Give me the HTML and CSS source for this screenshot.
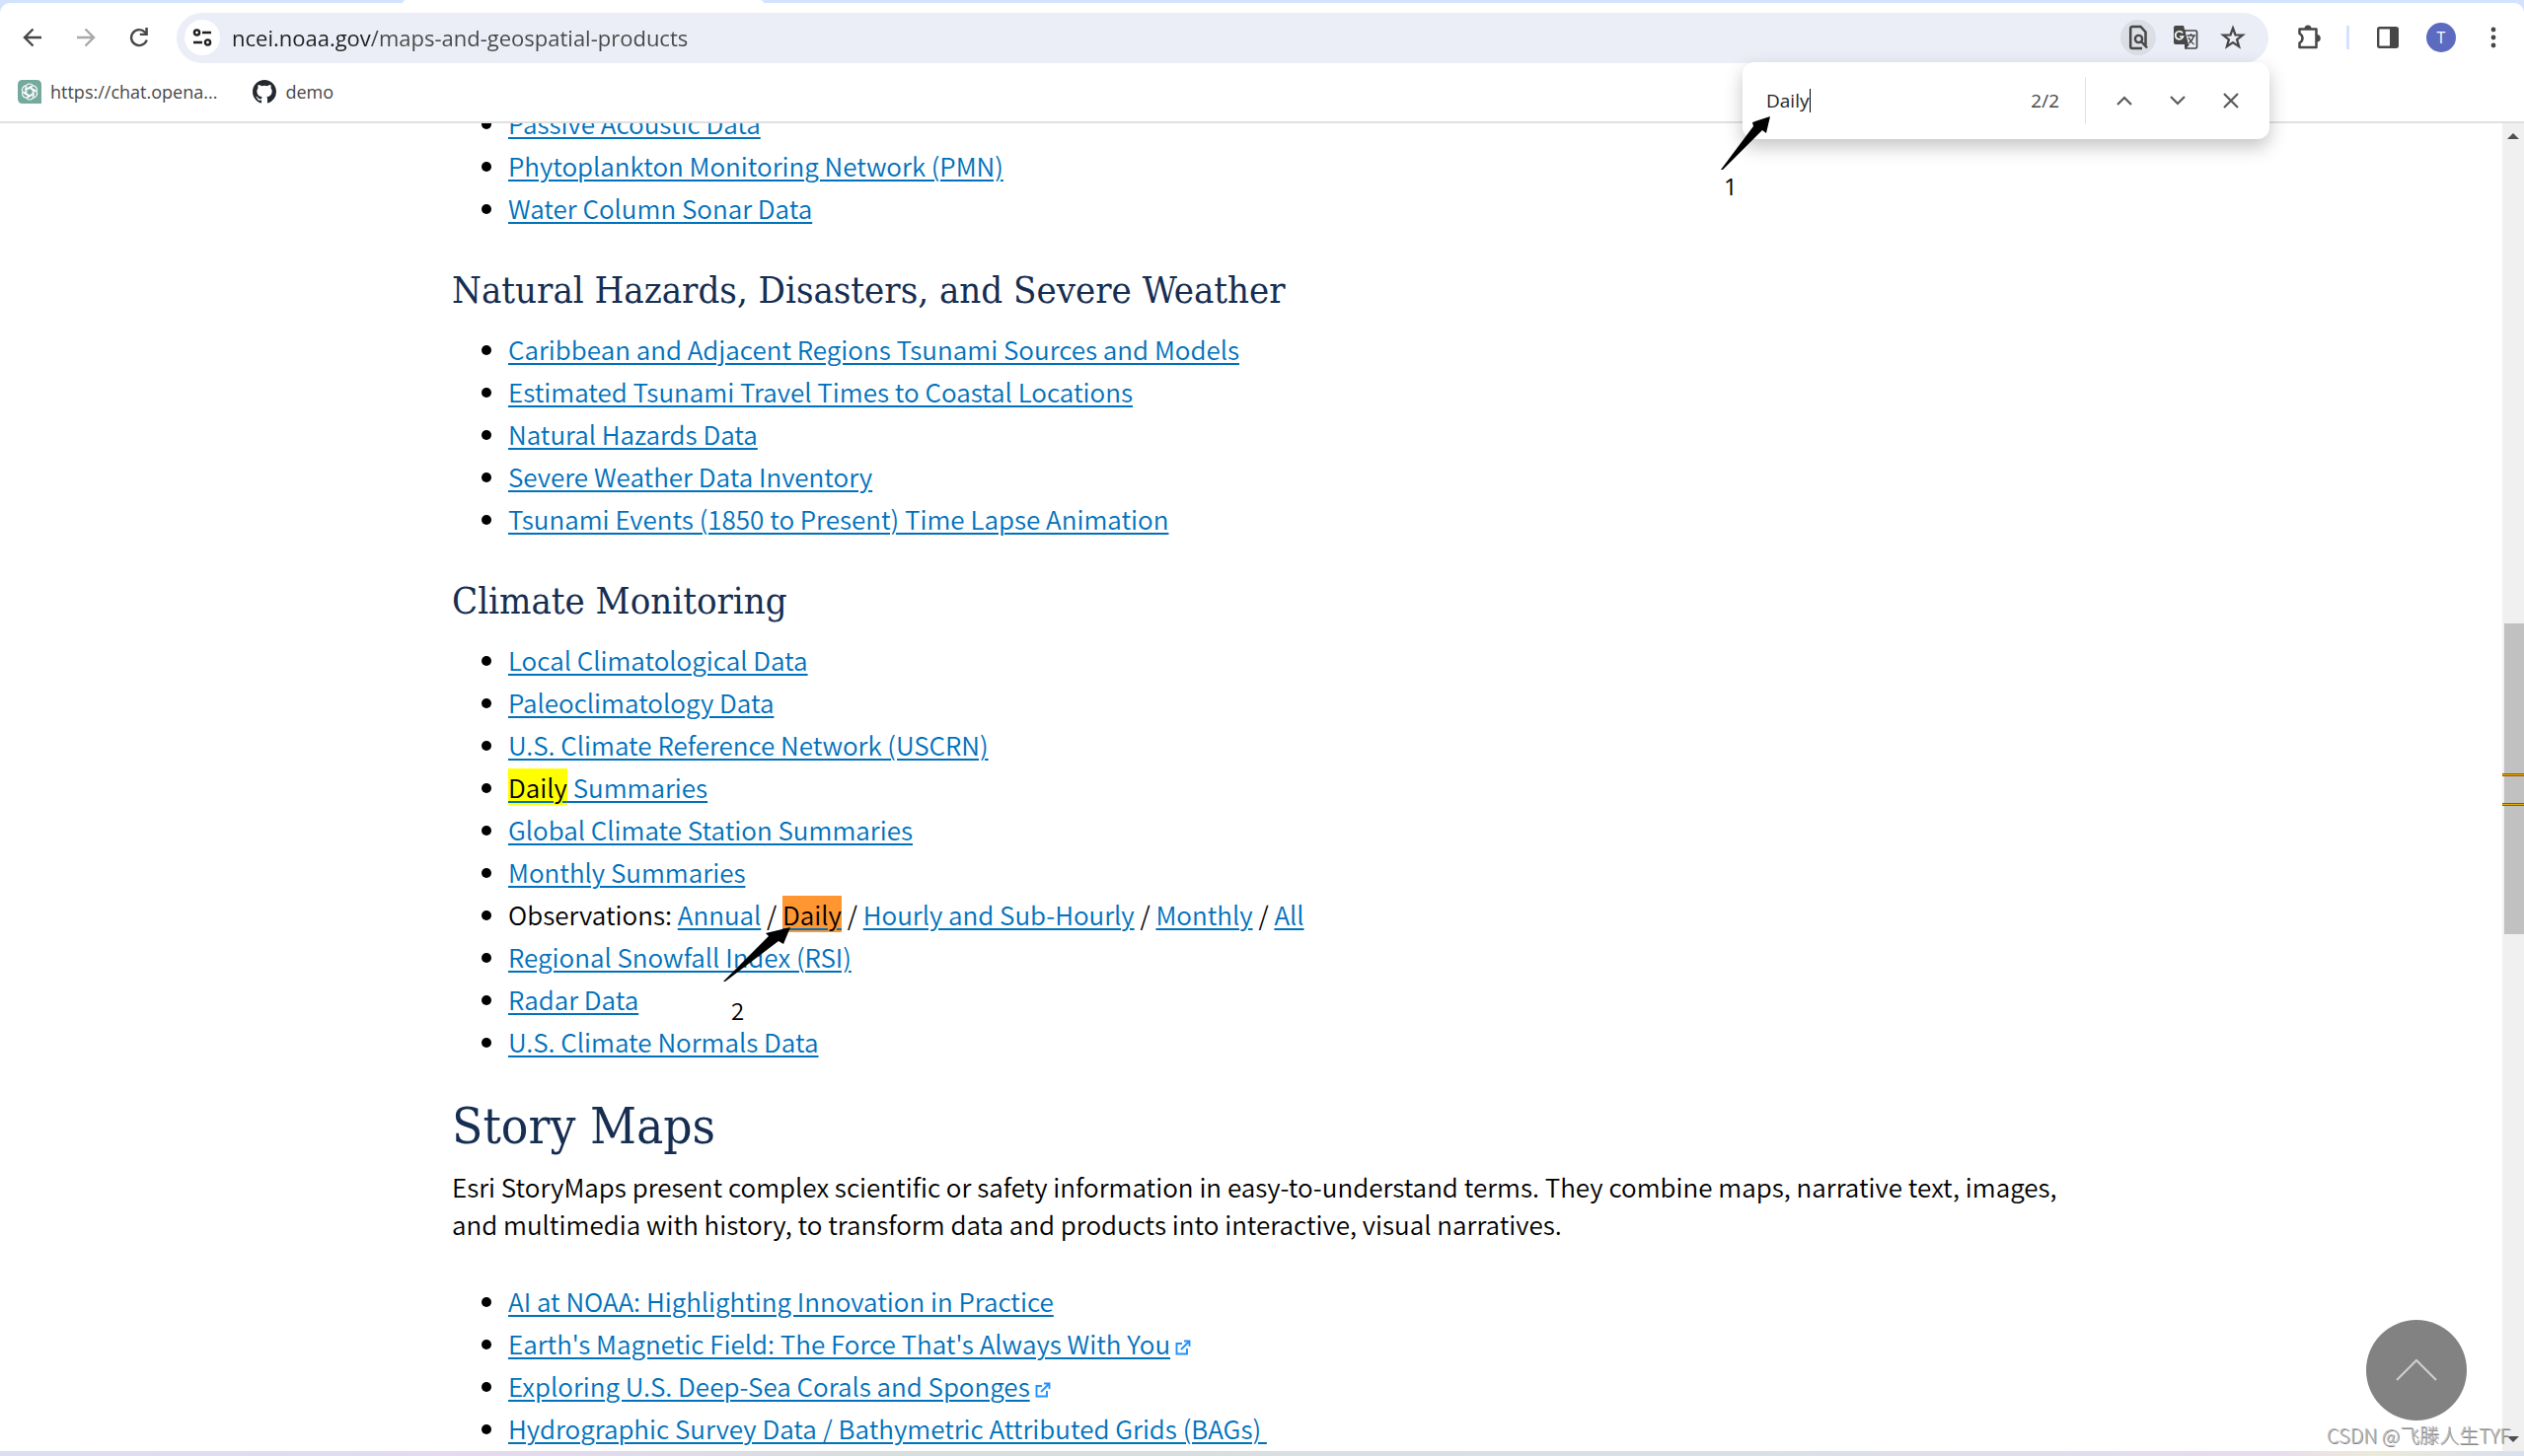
FILE: index.html
```html
<!DOCTYPE html>
<html lang="en">
<head>
<meta charset="utf-8">
<title>Maps and Geospatial Products</title>
<link rel="stylesheet" href="styles.css">
</head>
<body>
<header class="chrome">
  <div class="tabstrip"><div class="tab"></div></div>
  <div class="toolbar">
    <nav class="nav" aria-label="Navigation">
      <button class="icon-btn" aria-label="Back"><svg width="20" height="20" viewBox="0 0 20 20"><path d="M19 10H2M10.500 1.500L2 10l8.500 8.500" fill="none" stroke="#474747" stroke-width="2.400"/></svg></button>
      <button class="icon-btn" aria-label="Forward"><svg width="20" height="20" viewBox="0 0 20 20"><path d="M1 10h17M9.500 1.500L18 10l-8.500 8.500" fill="none" stroke="#a9a9a9" stroke-width="2.400"/></svg></button>
      <button class="icon-btn" aria-label="Reload"><svg width="20" height="20" viewBox="0 0 20 20"><path d="M17.700 12.500A8 8 0 1 1 16 4.700L18 7" fill="none" stroke="#474747" stroke-width="2.400"/><path d="M18.800 0v8h-8V5.700h5.500V0z" fill="#474747"/></svg></button>
    </nav>
    <div class="omnibox">
      <button class="site-info" aria-label="Site information"><svg width="20" height="18" viewBox="0 0 20 18" fill="none" stroke="#1f1f1f" stroke-width="2.400"><circle cx="4.500" cy="4" r="2.600"/><path d="M10 4h9M1 14h9"/><circle cx="15.500" cy="14" r="2.600"/></svg></button>
      <input class="url" type="text" aria-label="Address" value="ncei.noaa.gov/maps-and-geospatial-products">
      <button class="page-btn page-btn-on" aria-label="Find in page"><svg width="20" height="26" viewBox="0 0 20 26"><path d="M17.500 21V7.500L12.500 2H4Q2.200 2 2.200 4v18q0 2 1.800 2h10" fill="none" stroke="#474747" stroke-width="2.500"/><circle cx="10.500" cy="14.500" r="3.600" fill="none" stroke="#474747" stroke-width="2.400"/><path d="M13 17l6 6.500" stroke="#474747" stroke-width="2.500"/></svg></button>
      <button class="page-btn" aria-label="Translate"><svg width="26" height="26" viewBox="0 0 26 26"><path d="M12 6h11q1.500 0 1.500 1.500v15q0 1.500-1.500 1.500H13z" fill="none" stroke="#474747" stroke-width="1.700"/><path d="M3 1h8l5 19H3q-2 0-2-2V3q0-2 2-2zM12 20h5l-4 5z" fill="#474747"/><path d="M10 8.500A4 4 0 1 0 10.500 12H7" fill="none" stroke="#fff" stroke-width="1.700"/><path d="M14.500 11H23M18.500 9v2M21.500 11q-1.500 5-5 8M16 13q2 4.500 5.500 7" fill="none" stroke="#474747" stroke-width="1.500"/></svg></button>
      <button class="page-btn" aria-label="Bookmark"><svg width="26" height="26" viewBox="0 0 26 26"><path d="M13 3.500l2.500 6.800 7.300.3-5.700 4.500 2 7-6.100-4-6.100 4 2-7-5.700-4.500 7.300-.3z" fill="none" stroke="#474747" stroke-width="2.300"/></svg></button>
    </div>
    <div class="actions">
      <button class="icon-btn" aria-label="Extensions"><svg width="26" height="26" viewBox="0 0 26 26"><path d="M3.500 4.500h17v18.500h-17v-4.500q3-1.500 3-4.700t-3-4.800z" fill="none" stroke="#474747" stroke-width="2.500" stroke-linejoin="round"/><path d="M8.500 4a3.500 3.500 0 0 1 7 0zM21 10a3.800 3.800 0 0 1 0 7.600z" fill="#474747"/></svg></button>
      <span class="divider"></span>
      <button class="icon-btn" aria-label="Side panel"><svg width="22" height="22" viewBox="0 0 22 22"><rect x="1.200" y="1.200" width="19.600" height="19.600" rx="1.500" fill="none" stroke="#474747" stroke-width="2.400"/><path d="M13 1h8v20h-8z" fill="#474747"/></svg></button>
      <button class="avatar" aria-label="Profile">T</button>
      <button class="icon-btn" aria-label="Menu"><svg width="6" height="22" viewBox="0 0 6 22" fill="#474747"><circle cx="3" cy="3" r="2.400"/><circle cx="3" cy="11" r="2.400"/><circle cx="3" cy="19" r="2.400"/></svg></button>
    </div>
  </div>
  <nav class="bookmarks" aria-label="Bookmarks">
    <a href="#chat"><svg width="24" height="24" viewBox="0 0 24 24"><path d="M5 0h14q5 0 5 5v19H5q-5 0-5-5V5q0-5 5-5z" fill="#74aa9c"/><g fill="none" stroke="#fff" stroke-width="1.200"><g id="petal"><path d="M8 15V8.500Q8 4 12 4q2 0 3.300 1.600M10 9.500l4.500-2.600"/></g><use href="#petal" transform="rotate(60 12 12)"/><use href="#petal" transform="rotate(120 12 12)"/><use href="#petal" transform="rotate(180 12 12)"/><use href="#petal" transform="rotate(240 12 12)"/><use href="#petal" transform="rotate(300 12 12)"/></g></svg>https://chat.opena...</a>
    <a href="#demo"><svg width="24" height="24" viewBox="0 0 16 16"><path fill="#24292f" d="M8 0C3.580 0 0 3.580 0 8c0 3.540 2.290 6.530 5.470 7.590.4.070.55-.17.55-.38 0-.19-.01-.82-.01-1.490-2.010.37-2.530-.49-2.690-.94-.09-.23-.48-.94-.82-1.130-.28-.15-.68-.52-.01-.53.63-.01 1.080.58 1.230.82.72 1.210 1.870.87 2.330.66.07-.52.28-.87.51-1.070-1.780-.2-3.640-.89-3.640-3.950 0-.87.31-1.590.82-2.150-.08-.2-.36-1.020.08-2.120 0 0 .67-.21 2.200.82a7.600 7.600 0 0 1 4 0c1.530-1.040 2.200-.82 2.200-.82.44 1.100.16 1.920.08 2.120.51.56.82 1.270.82 2.150 0 3.070-1.870 3.750-3.650 3.950.29.25.54.73.54 1.480 0 1.070-.01 1.930-.01 2.200 0 .21.15.46.55.38A8.010 8.010 0 0 0 16 8c0-4.420-3.580-8-8-8z"/></svg>demo</a>
  </nav>
  <form class="findbar">
    <input class="find-input" type="text" aria-label="Find in page" value="Daily" size="5">
    <span class="caret"></span>
    <output class="count">2/2</output>
    <button type="button" class="find-btn" aria-label="Previous"><svg width="16" height="10" viewBox="0 0 16 10"><path d="M1 9l7-7 7 7" fill="none" stroke="#5a5a5a" stroke-width="2.200"/></svg></button>
    <button type="button" class="find-btn" aria-label="Next"><svg width="16" height="10" viewBox="0 0 16 10"><path d="M1 1l7 7 7-7" fill="none" stroke="#5a5a5a" stroke-width="2.200"/></svg></button>
    <button type="button" class="find-btn" aria-label="Close"><svg width="16" height="16" viewBox="0 0 16 16"><path d="M1 1l14 14M15 1L1 15" fill="none" stroke="#5a5a5a" stroke-width="2.200"/></svg></button>
    <div class="note note-one"><svg width="52" height="56" viewBox="0 0 52 56"><path d="M50 1L46 18l-4-3L2 55H0L33 11l-1-4z"/></svg><span>1</span></div>
  </form>
</header>

<div class="viewport">
  <main class="page">
    <ul class="links links-first">
      <li><a href="#a">Passive Acoustic Data</a></li>
      <li><a href="#a">Phytoplankton Monitoring Network (PMN)</a></li>
      <li><a href="#a">Water Column Sonar Data</a></li>
    </ul>
    <h3>Natural Hazards, Disasters, and Severe Weather</h3>
    <ul class="links">
      <li><a href="#a">Caribbean and Adjacent Regions Tsunami Sources and Models</a></li>
      <li><a href="#a">Estimated Tsunami Travel Times to Coastal Locations</a></li>
      <li><a href="#a">Natural Hazards Data</a></li>
      <li><a href="#a">Severe Weather Data Inventory</a></li>
      <li><a href="#a">Tsunami Events (1850 to Present) Time Lapse Animation</a></li>
    </ul>
    <h3>Climate Monitoring</h3>
    <ul class="links">
      <li><a href="#a">Local Climatological Data</a></li>
      <li><a href="#a">Paleoclimatology Data</a></li>
      <li><a href="#a">U.S. Climate Reference Network (USCRN)</a></li>
      <li><a href="#a"><mark>Daily</mark> Summaries</a></li>
      <li><a href="#a">Global Climate Station Summaries</a></li>
      <li><a href="#a">Monthly Summaries</a></li>
      <li>Observations: <a href="#a">Annual</a> / <a href="#a" class="hit"><mark class="current">Daily</mark><span class="note note-two"><svg width="70" height="56" viewBox="0 0 70 56"><path d="M68 0L61 17l-5-3L2 55H0L46 9l-3-3z"/></svg><span>2</span></span></a> / <a href="#a">Hourly and Sub-Hourly</a> / <a href="#a">Monthly</a> / <a href="#a">All</a></li>
      <li><a href="#a">Regional Snowfall Index (RSI)</a></li>
      <li><a href="#a">Radar Data</a></li>
      <li><a href="#a">U.S. Climate Normals Data</a></li>
    </ul>
    <h2>Story Maps</h2>
    <p>Esri StoryMaps present complex scientific or safety information in easy-to-understand terms. They combine maps, narrative text, images, and multimedia with history, to transform data and products into interactive, visual narratives.</p>
    <ul class="links">
      <li><a href="#a">AI at NOAA: Highlighting Innovation in Practice</a></li>
      <li><a href="#a">Earth's Magnetic Field: The Force That's Always With You</a><svg class="ext" width="16" height="16" viewBox="0 0 16 16"><path d="M7 4H1.500v10.500H12V9M6 10l8-8M9 1.500h5.500V7" fill="none" stroke="#2491ff" stroke-width="1.900"/></svg></li>
      <li><a href="#a">Exploring U.S. Deep-Sea Corals and Sponges</a><svg class="ext" width="16" height="16" viewBox="0 0 16 16"><path d="M7 4H1.500v10.500H12V9M6 10l8-8M9 1.500h5.500V7" fill="none" stroke="#2491ff" stroke-width="1.900"/></svg></li>
      <li><a href="#a">Hydrographic Survey Data / Bathymetric Attributed Grids (BAGs)&nbsp;</a></li>
    </ul>
  </main>
  <div class="scrollbar">
    <svg width="12" height="6" viewBox="0 0 12 6"><path d="M6 0l6 6H0z" fill="#505050"/></svg>
    <div class="track"><div class="thumb"></div><i class="tick tick-a"></i><i class="tick tick-b"></i></div>
    <svg width="12" height="6" viewBox="0 0 12 6"><path d="M0 0h12L6 6z" fill="#505050"/></svg>
  </div>
  <button class="to-top" aria-label="Back to top"><svg width="44" height="24" viewBox="0 0 44 24"><path d="M2 22L22 2l20 20" fill="none" stroke="#d0d0d0" stroke-width="2"/></svg></button>
  <div class="watermark">CSDN @飞滕人生TYF</div>
</div>
<footer class="desktop-edge"></footer>
</body>
</html>
```
FILE: styles.css
```css
* { box-sizing: border-box; }

body {
  margin: 0;
  height: 100vh;
  display: flex;
  flex-direction: column;
  overflow: hidden;
  background: #fff;
  font-family: "Open Sans", sans-serif;
}

button, input {
  border: 0;
  padding: 0;
  background: none;
  font: inherit;
  color: inherit;
}

button {
  display: flex;
  align-items: center;
  justify-content: center;
  flex: none;
}

svg { flex: none; }

/* Browser frame */
.chrome {
  position: relative;
  z-index: 2;
  flex: none;
  border-bottom: 2px solid #e0e0e0;
  background: #d3e3fd;
}

.tabstrip { height: 3px; padding-left: 408px; }
.tab { width: 366px; height: 4px; background: #fff; border-radius: 4px 4px 0 0; }

.toolbar {
  display: flex;
  align-items: center;
  gap: 28px;
  height: 70px;
  padding: 0 28px 0 23px;
  background: #fff;
  border-radius: 10px 10px 0 0;
}

.nav { display: flex; gap: 34px; }

.omnibox {
  flex: 1;
  display: flex;
  align-items: center;
  height: 51px;
  padding: 0 18px 0 8px;
  border-radius: 26px;
  background: #ebeef7;
}

.site-info { width: 36px; height: 36px; border-radius: 50%; background: #fff; }

.url {
  flex: 1;
  margin-left: 12px;
  font-size: 22px;
  color: #474747;
  background: linear-gradient(90deg, #1f1f1f 141px, #474747 141px);
  background-clip: text;
  -webkit-text-fill-color: transparent;
}

.page-btn { width: 36px; height: 36px; margin-left: 12px; border-radius: 50%; }
.page-btn-on { background: #dcdee5; }

.actions { display: flex; align-items: center; gap: 28px; }
.divider { width: 3px; height: 24px; margin-left: -3px; background: #d3e3fd; }

.avatar {
  width: 30px;
  height: 30px;
  border-radius: 50%;
  background: #5c6bc0;
  color: #fff;
  font-size: 16px;
}

.actions .icon-btn:last-child { margin-left: 7px; }

.bookmarks {
  display: flex;
  gap: 36px;
  height: 50px;
  padding: 5px 18px 0;
  background: #fff;
}

.bookmarks a {
  display: flex;
  align-items: center;
  gap: 9px;
  height: 30px;
  font-size: 18px;
  color: #474747;
  text-decoration: none;
}

.findbar {
  position: absolute;
  top: 63px;
  right: 258px;
  width: 534px;
  height: 78px;
  display: flex;
  align-items: center;
  padding: 0 12px 0 24px;
  border-radius: 12px;
  background: #fff;
  box-shadow: 0 8px 18px rgba(60, 64, 67, 0.3);
  font-size: 19px;
  color: #1f1f1f;
}

.find-input { width: 44px; outline: 0; }
.caret { width: 1px; height: 24px; background: #000; }

.count {
  margin-left: auto;
  height: 48px;
  padding-right: 26px;
  border-right: 1px solid #d3e3fd;
  font-size: 19px;
  line-height: 48px;
  color: #474747;
}

.find-btn { width: 54px; height: 54px; }
.count + .find-btn { margin-left: 12px; }

/* Step annotations */
.note {
  position: absolute;
  color: #000;
  font-size: 24px;
  line-height: 28px;
}

.note svg { display: block; }
.note-one { top: 54px; left: -22px; }
.note-two { top: 35px; left: -60px; }
.note-one span { display: block; padding: 2px 0 0 3px; }
.note-two span { display: block; padding: 14px 0 0 8px; }

/* Page */
.viewport {
  position: relative;
  flex: 1;
  min-height: 0;
  display: flex;
  overflow: hidden;
}

.page {
  flex: 1;
  padding: 0 calc(50% - 841px) 0 458px;
  font-family: "Noto Sans CJK SC", sans-serif;
  font-size: 26px;
  font-weight: 350;
  line-height: 43px;
  color: #000;
}

h2, h3 {
  font-family: "DejaVu Serif Condensed", "DejaVu Serif", serif;
  font-weight: 400;
  color: #162e51;
}

h3 { margin: 42px 0 18px; font-size: 38px; line-height: 40px; }
h2 { margin: 38px 0 15px; font-size: 51px; line-height: 54px; }
p { margin: 0 0 37px; line-height: 38px; }

.links { margin: 0; padding-left: 57px; }
.links-first { margin-top: -22px; }
.links a { color: #0071bc; text-decoration-thickness: 2px; text-underline-offset: 3px; }

.hit { position: relative; display: inline-block; }

mark { background: #ff0; color: #000; }
.current { background: #ff9632; }

.ext { margin-left: 5px; vertical-align: -1px; }

.scrollbar {
  flex: none;
  width: 22px;
  display: flex;
  flex-direction: column;
  align-items: center;
  padding: 10px 0 9px;
  background: #f0f0f0;
}

.track { position: relative; flex: 1; width: 22px; }

.thumb {
  position: absolute;
  top: calc(37% + 4px);
  left: 2px;
  right: 0;
  height: 24%;
  background: #c1c1c1;
}

.tick {
  position: absolute;
  left: 0;
  right: 0;
  height: 3px;
  border: solid #9b5200;
  border-width: 1px 0;
  background: #e0b000;
}

.tick-a { top: calc(49% - 1px); }
.tick-b { top: calc(51% + 2px); }

.to-top {
  position: absolute;
  right: 58px;
  bottom: 31px;
  width: 102px;
  height: 102px;
  border-radius: 50%;
  background: #828282;
}

.watermark {
  position: absolute;
  right: 14px;
  bottom: 2px;
  font: 300 20px/28px "Noto Sans CJK SC", sans-serif;
  color: #b4b4b4;
  text-shadow: 1px 1px 0 #888;
}

.desktop-edge {
  flex: none;
  height: 5px;
  background: linear-gradient(90deg, #dcdff0, #e4daef 20%, #d8dede 35%, #dbe0e6 70%, #e6dcf0 90%, #ecead8 94%, #d8dfef);
}
```
